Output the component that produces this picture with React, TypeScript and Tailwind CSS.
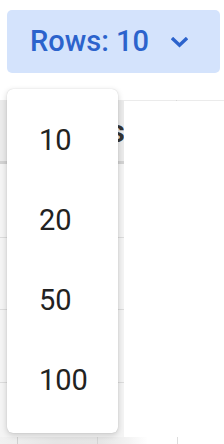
import React from "react";

export default function App() {
  const items = ["10", "20", "50", "100"];
  return (
    <div
      className="relative w-[224px] h-[444px] overflow-hidden bg-white"
      style={{ fontFamily: "Roboto, 'Liberation Sans', Arial, sans-serif" }}
    >
      <div className="pt-[10px] pl-[7px]">
        <button className="flex items-center w-[213px] h-[63px] rounded-[5px] bg-[#d4e3fc] pl-[23px] text-[#2c63cc] text-[29px] font-medium">
          <span>Rows: 10</span>
          <svg
            className="ml-[22px] mt-[2px]"
            width="17"
            height="11"
            viewBox="0 0 17 11"
            fill="none"
          >
            <path
              d="M2.2 2.2 L8.5 8.2 L14.8 2.2"
              stroke="#2c63cc"
              strokeWidth="3.4"
              strokeLinecap="square"
              strokeLinejoin="miter"
            />
          </svg>
        </button>
      </div>

      <div className="mt-[27px] border-t border-[#ebebeb] relative">
        <div className="flex h-[336px]">
          <div className="w-[124px] flex flex-col bg-[#f4f4f4]">
            <div className="h-[63px] bg-[#ebebeb] border-b-[3px] border-[#d2d2d2] flex items-center justify-end overflow-hidden">
              <span className="text-[31px] font-semibold text-[#333] leading-none -mr-[1px]">s</span>
            </div>
            <div className="h-[74px] border-b border-[#dcdcdc]" />
            <div className="h-[72px] border-b border-[#dcdcdc]" />
            <div className="h-[73px] border-b border-[#dcdcdc]" />
            <div className="flex-1" />
          </div>
          <div className="flex-1 bg-white" />
        </div>
        <div className="flex h-[8px] bg-[linear-gradient(to_right,#f1f1f1,#e5e5e5_25%,#e6e6e6_45%,#f4f4f4_58%,#ffffff_66%)]">
          <div className="w-[17px]" />
          <div className="w-[80px] border-l border-[#d0d0d0]" />
          <div className="w-[80px] border-l border-[#d4d4d4]" />
          <div className="flex-1 border-l border-[#dddddd]" />
        </div>
        <div className="absolute left-[176px] top-[-1px] w-[1px] h-[1px] bg-[#d8d8d8]" />
      </div>

      <div className="absolute left-[7px] top-[89px] w-[111px] h-[344px] rounded-[6px] bg-white py-[12px] shadow-[0_2px_6px_rgba(0,0,0,0.18),0_0_1px_rgba(0,0,0,0.2)]">
        {items.map((n) => (
          <div
            key={n}
            className="h-[80px] flex items-center pl-[32px] text-[29px] text-[#222]"
          >
            {n}
          </div>
        ))}
      </div>
    </div>
  );
}
